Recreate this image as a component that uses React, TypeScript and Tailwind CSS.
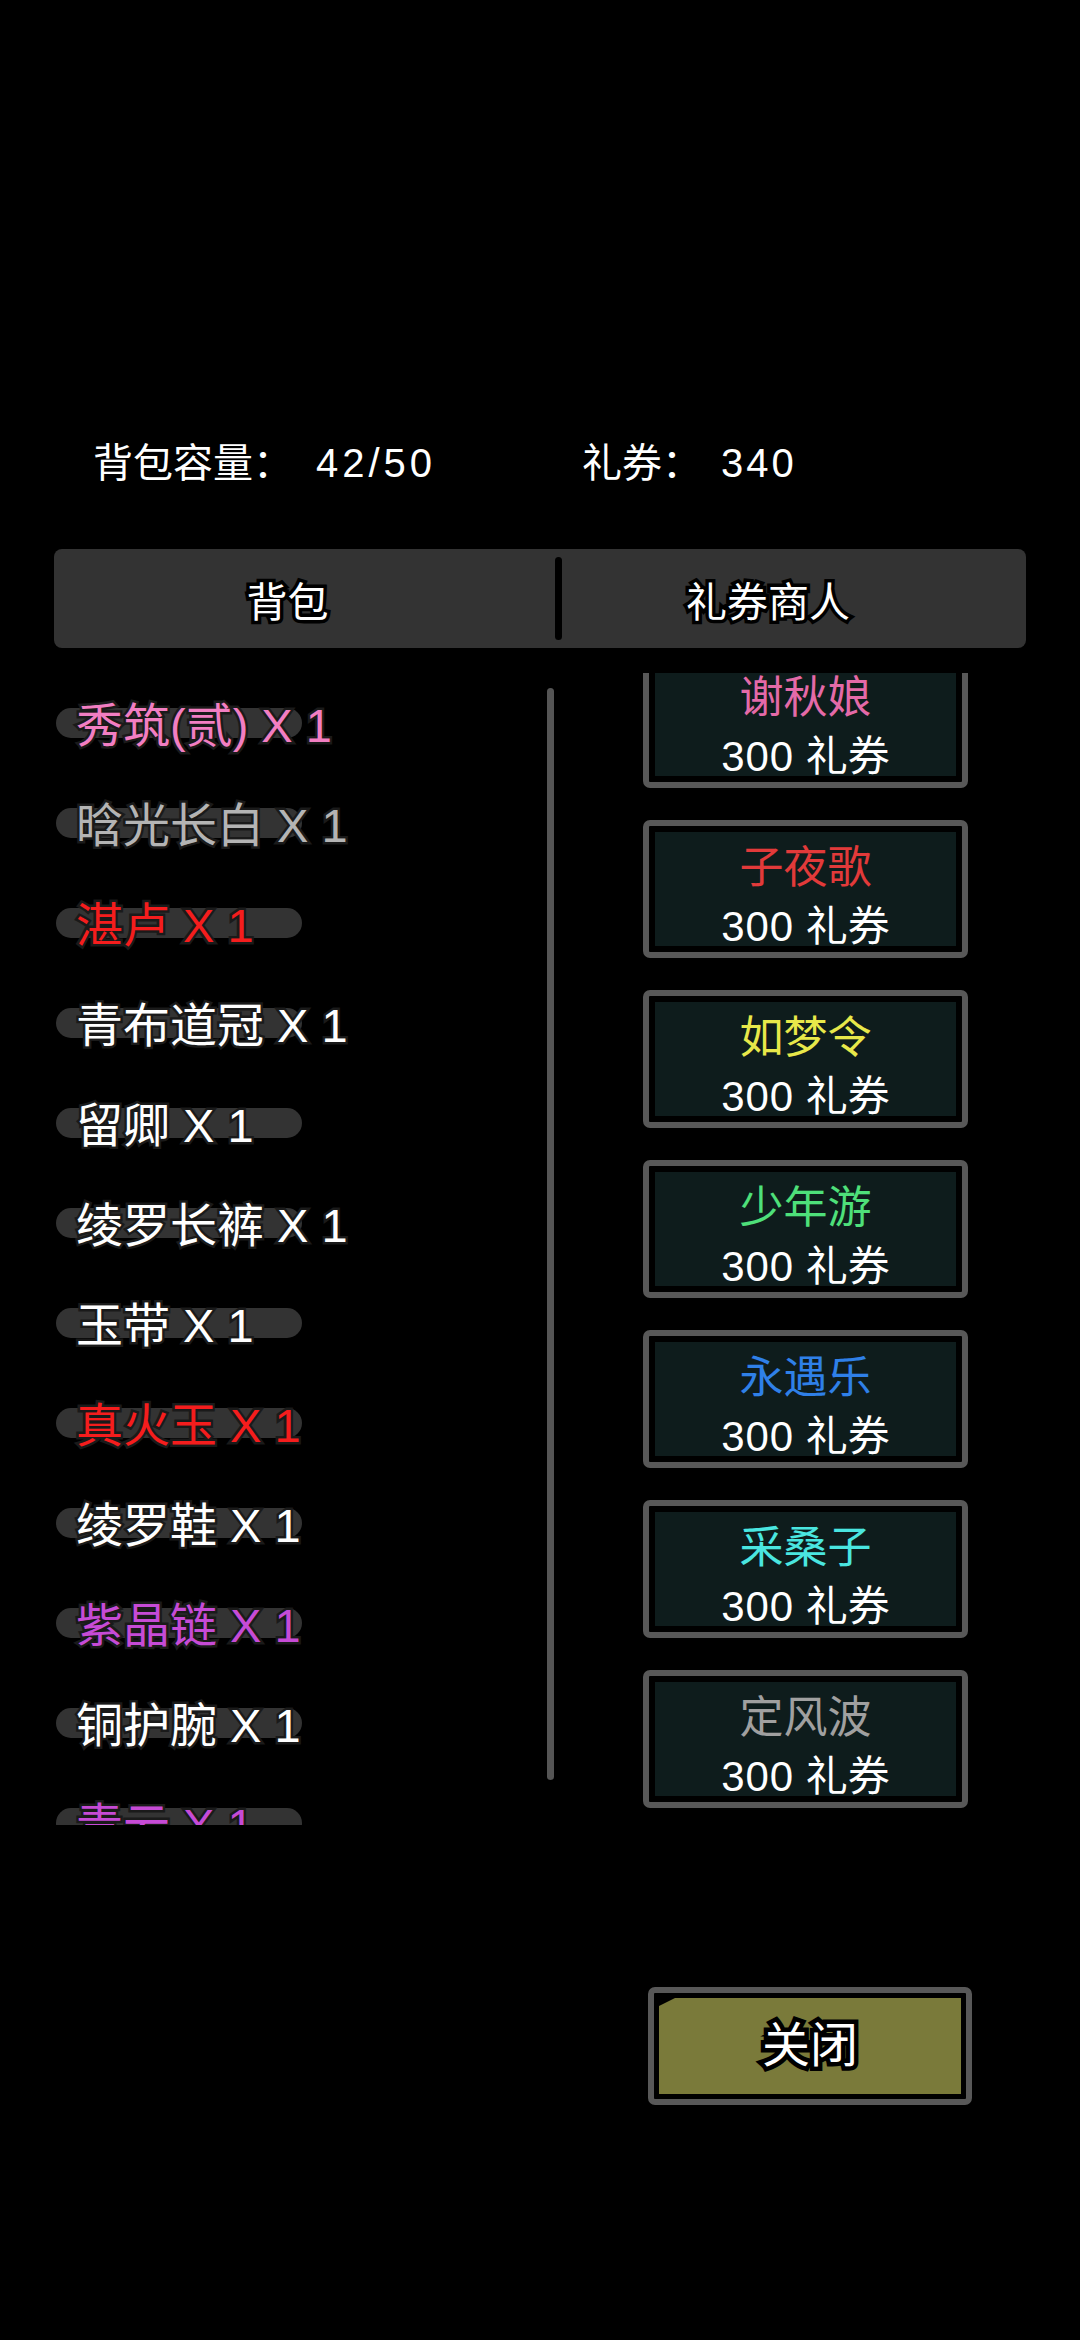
import React from "react";

const FONT = "[font-family:'Liberation_Sans','Noto_Sans_CJK_SC',sans-serif]";

const items: { name: string; color: string }[] = [
  { name: "秀筑(贰) X 1", color: "text-[#f27ec2]" },
  { name: "晗光长白 X 1", color: "text-[#b4b4b4]" },
  { name: "湛卢 X 1", color: "text-[#f51d1d]" },
  { name: "青布道冠 X 1", color: "text-white" },
  { name: "留卿 X 1", color: "text-white" },
  { name: "绫罗长裤 X 1", color: "text-white" },
  { name: "玉带 X 1", color: "text-white" },
  { name: "真火玉 X 1", color: "text-[#f51d1d]" },
  { name: "绫罗鞋 X 1", color: "text-white" },
  { name: "紫晶链 X 1", color: "text-[#c64bd6]" },
  { name: "铜护腕 X 1", color: "text-white" },
  { name: "青云 X 1", color: "text-[#c64bd6]" },
];

const cards: { name: string; color: string }[] = [
  { name: "谢秋娘", color: "text-[#e46aa8]" },
  { name: "子夜歌", color: "text-[#e23a3a]" },
  { name: "如梦令", color: "text-[#e8e84a]" },
  { name: "少年游", color: "text-[#4ee07a]" },
  { name: "永遇乐", color: "text-[#2f80e8]" },
  { name: "采桑子", color: "text-[#4ae6e0]" },
  { name: "定风波", color: "text-[#a0a0a0]" },
];

export default function App() {
  return (
    <div className={`w-[1080px] h-[2340px] bg-black overflow-hidden flex flex-col ${FONT}`}>
      {/* header */}
      <div className="mt-[439px] h-[48px] flex items-center text-white text-[40px] leading-[48px] whitespace-nowrap">
        <span className="ml-[93px] w-[223px]">背包容量：</span>
        <span className="w-[266px] tracking-[4px]">42/50</span>
        <span className="w-[139px]">礼券：</span>
        <span className="tracking-[3px]">340</span>
      </div>

      {/* tabs */}
      <div className="mt-[62px] ml-[54px] w-[972px] h-[99px] bg-[#333333] rounded-[8px] flex items-center">
        <div className="w-[501px] h-full pr-[34px] pt-[10px] flex items-center justify-center text-white text-[41px] [-webkit-text-stroke:7px_black] [paint-order:stroke_fill]">
          背包
        </div>
        <div className="w-[7px] h-[83px] bg-black rounded-full" />
        <div className="flex-1 h-full pr-[52px] pt-[10px] flex items-center justify-center text-white text-[41px] [-webkit-text-stroke:7px_black] [paint-order:stroke_fill]">
          礼券商人
        </div>
      </div>

      {/* content */}
      <div className="mt-[25px] h-[1152px] overflow-hidden flex flex-row">
        <div className="w-[547px] pl-[56px] flex flex-col">
          {items.map((it, i) => (
            <div key={i} className="h-[100px] shrink-0 flex items-center">
              <div className="w-[246px] h-[30px] rounded-full bg-[#333333] flex items-center overflow-visible">
                <span
                  className={`pl-[20px] pt-[6px] whitespace-nowrap text-[47px] leading-[30px] ${it.color} [-webkit-text-stroke:5px_#1a1a1a] [paint-order:stroke_fill]`}
                >
                  {it.name}
                </span>
              </div>
            </div>
          ))}
        </div>
        <div className="mt-[15px] w-[7px] h-[1092px] bg-[#555555] rounded-full shrink-0" />
        <div className="ml-[89px] -mt-[23px] flex flex-col gap-[32px]">
          {cards.map((c, i) => (
            <div
              key={i}
              className="w-[325px] h-[138px] shrink-0 rounded-[7px] border-[6px] border-[#585858] bg-black p-[6px]"
            >
              <div className="w-full h-full bg-[#0e1c1c] flex flex-col items-center">
                <div className={`mt-[16px] text-[44px] leading-[40px] whitespace-nowrap ${c.color}`}>{c.name}</div>
                <div className="mt-[21px] text-[42px] leading-[36px] whitespace-nowrap text-white">
                  <span className="tracking-[1px]">300</span> 礼券
                </div>
              </div>
            </div>
          ))}
        </div>
      </div>

      {/* close button */}
      <div className="mt-[162px] ml-[648px] w-[324px] h-[118px] rounded-[7px] border-[6px] border-[#585858] bg-black p-[5px]">
        <div className="w-full h-full bg-[#7a7a3a] flex items-center justify-center [clip-path:polygon(16px_0,100%_0,100%_100%,0_100%,0_8px)]">
          <span className="text-white text-[48px] leading-[50px] [-webkit-text-stroke:9px_black] [paint-order:stroke_fill]">
            关闭
          </span>
        </div>
      </div>
    </div>
  );
}
